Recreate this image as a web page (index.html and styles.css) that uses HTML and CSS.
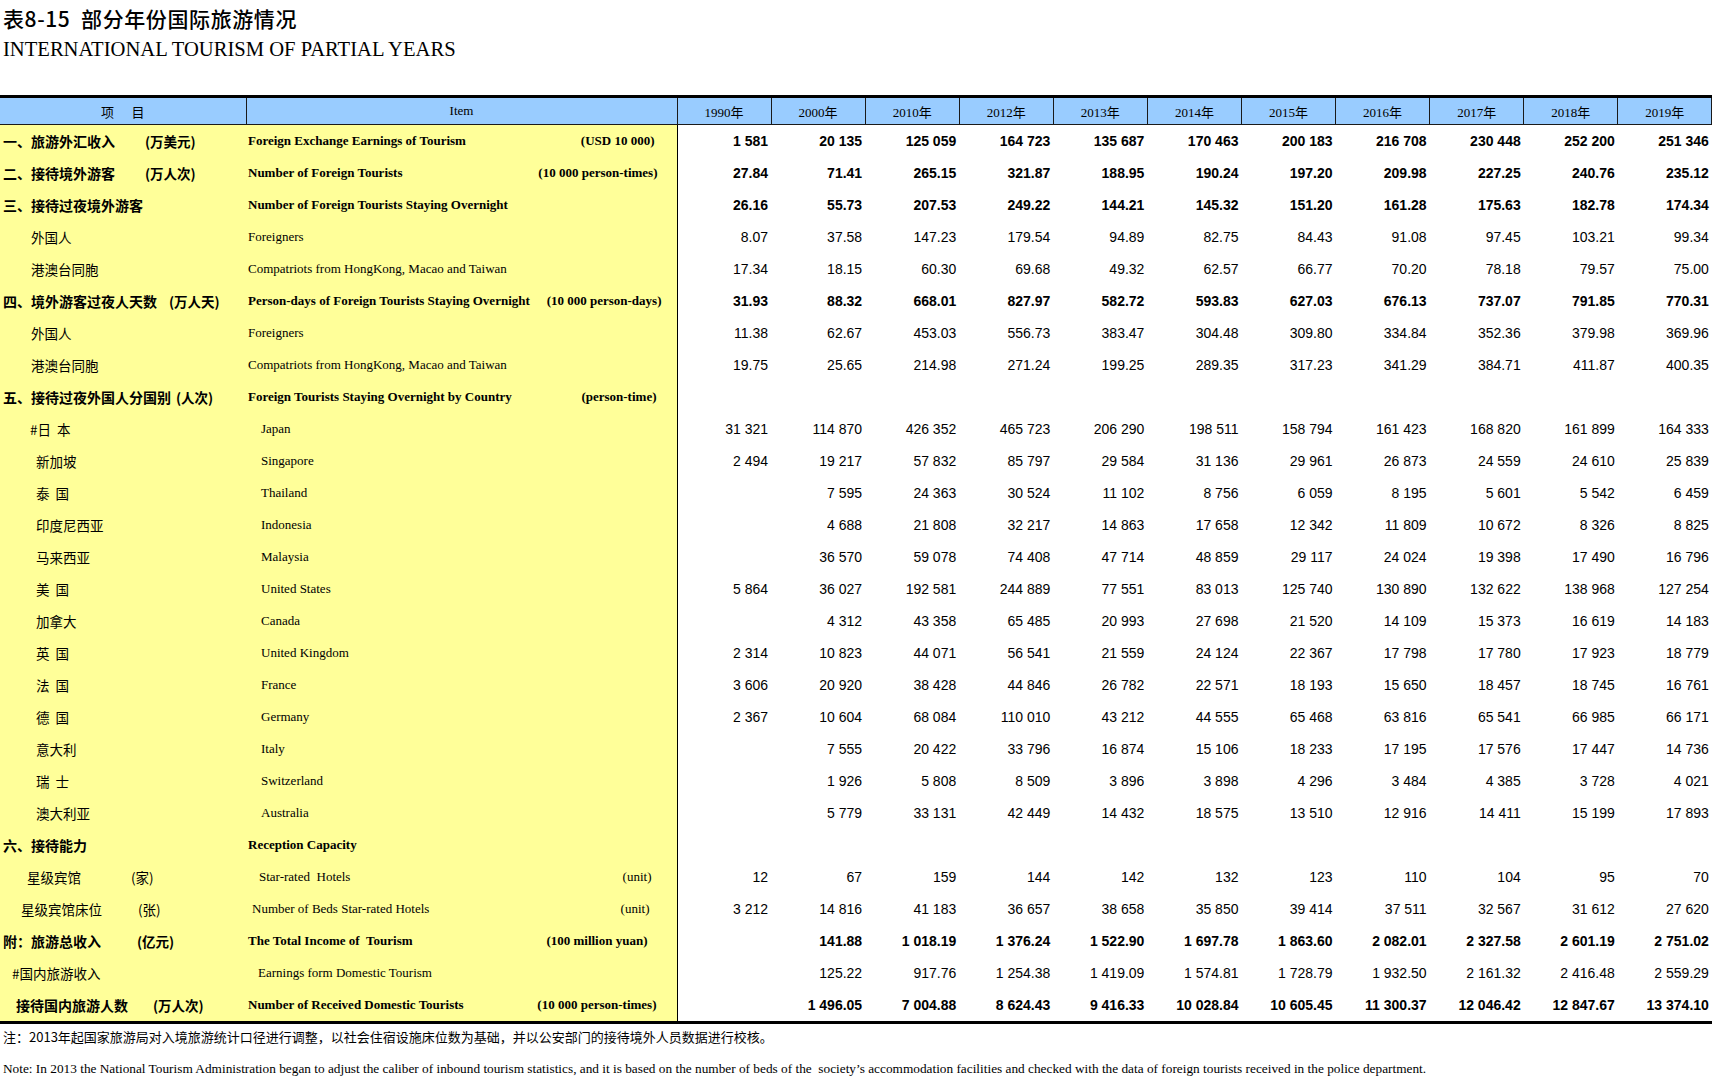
FILE: index.html
```html
<!DOCTYPE html>
<html lang="zh-CN">
<head>
<meta charset="utf-8">
<title>表8-15 部分年份国际旅游情况</title>
<link rel="stylesheet" href="styles.css">
</head>
<body>
<div class="page">
  <h1 class="title-cn">表8-15&nbsp;&nbsp;部分年份国际旅游情况</h1>
  <h2 class="title-en">INTERNATIONAL TOURISM OF PARTIAL YEARS</h2>

  <table class="data">
    <colgroup>
      <col class="c-cn"><col class="c-en">
      <col class="c-y"><col class="c-y"><col class="c-y"><col class="c-y"><col class="c-y"><col class="c-y"><col class="c-y"><col class="c-y"><col class="c-y"><col class="c-y"><col class="c-y">
    </colgroup>
    <thead>
      <tr>
        <th class="h-cn">项&nbsp;&nbsp;&nbsp;&nbsp;&nbsp;&nbsp;目</th>
        <th class="h-en">Item</th>
        <th>1990年</th><th>2000年</th><th>2010年</th><th>2012年</th><th>2013年</th><th>2014年</th><th>2015年</th><th>2016年</th><th>2017年</th><th>2018年</th><th>2019年</th>
      </tr>
    </thead>
    <tbody>
      <tr class="b">
        <td class="cn"><div class="cell"><span class="lab w142">一、旅游外汇收入</span><span>(万美元)</span></div></td>
        <td class="en"><div class="cell"><span>Foreign Exchange Earnings of Tourism</span><span class="unit u22">(USD 10 000)</span></div></td>
        <td>1 581</td><td>20 135</td><td>125 059</td><td>164 723</td><td>135 687</td><td>170 463</td><td>200 183</td><td>216 708</td><td>230 448</td><td>252 200</td><td>251 346</td>
      </tr>
      <tr class="b">
        <td class="cn"><div class="cell"><span class="lab w142">二、接待境外游客</span><span>(万人次)</span></div></td>
        <td class="en"><div class="cell"><span>Number of Foreign Tourists</span><span class="unit u19">(10 000 person-times)</span></div></td>
        <td>27.84</td><td>71.41</td><td>265.15</td><td>321.87</td><td>188.95</td><td>190.24</td><td>197.20</td><td>209.98</td><td>227.25</td><td>240.76</td><td>235.12</td>
      </tr>
      <tr class="b">
        <td class="cn"><div class="cell"><span class="lab">三、接待过夜境外游客</span></div></td>
        <td class="en"><div class="cell"><span>Number of Foreign Tourists Staying Overnight</span></div></td>
        <td>26.16</td><td>55.73</td><td>207.53</td><td>249.22</td><td>144.21</td><td>145.32</td><td>151.20</td><td>161.28</td><td>175.63</td><td>182.78</td><td>174.34</td>
      </tr>
      <tr>
        <td class="cn"><div class="cell i31"><span class="lab">外国人</span></div></td>
        <td class="en"><div class="cell"><span>Foreigners</span></div></td>
        <td>8.07</td><td>37.58</td><td>147.23</td><td>179.54</td><td>94.89</td><td>82.75</td><td>84.43</td><td>91.08</td><td>97.45</td><td>103.21</td><td>99.34</td>
      </tr>
      <tr>
        <td class="cn"><div class="cell i31"><span class="lab">港澳台同胞</span></div></td>
        <td class="en"><div class="cell"><span>Compatriots from HongKong, Macao and Taiwan</span></div></td>
        <td>17.34</td><td>18.15</td><td>60.30</td><td>69.68</td><td>49.32</td><td>62.57</td><td>66.77</td><td>70.20</td><td>78.18</td><td>79.57</td><td>75.00</td>
      </tr>
      <tr class="b">
        <td class="cn"><div class="cell"><span class="lab w166">四、境外游客过夜人天数</span><span>(万人天)</span></div></td>
        <td class="en"><div class="cell"><span>Person-days of Foreign Tourists Staying Overnight</span><span class="unit u15">(10 000 person-days)</span></div></td>
        <td>31.93</td><td>88.32</td><td>668.01</td><td>827.97</td><td>582.72</td><td>593.83</td><td>627.03</td><td>676.13</td><td>737.07</td><td>791.85</td><td>770.31</td>
      </tr>
      <tr>
        <td class="cn"><div class="cell i31"><span class="lab">外国人</span></div></td>
        <td class="en"><div class="cell"><span>Foreigners</span></div></td>
        <td>11.38</td><td>62.67</td><td>453.03</td><td>556.73</td><td>383.47</td><td>304.48</td><td>309.80</td><td>334.84</td><td>352.36</td><td>379.98</td><td>369.96</td>
      </tr>
      <tr>
        <td class="cn"><div class="cell i31"><span class="lab">港澳台同胞</span></div></td>
        <td class="en"><div class="cell"><span>Compatriots from HongKong, Macao and Taiwan</span></div></td>
        <td>19.75</td><td>25.65</td><td>214.98</td><td>271.24</td><td>199.25</td><td>289.35</td><td>317.23</td><td>341.29</td><td>384.71</td><td>411.87</td><td>400.35</td>
      </tr>
      <tr class="b">
        <td class="cn"><div class="cell"><span class="lab w173">五、接待过夜外国人分国别</span><span>(人次)</span></div></td>
        <td class="en"><div class="cell"><span>Foreign Tourists Staying Overnight by Country</span><span class="unit u20">(person-time)</span></div></td>
        <td></td><td></td><td></td><td></td><td></td><td></td><td></td><td></td><td></td><td></td><td></td>
      </tr>
      <tr>
        <td class="cn"><div class="cell i30"><span class="lab">#日&nbsp;&nbsp;本</span></div></td>
        <td class="en"><div class="cell e15"><span>Japan</span></div></td>
        <td>31 321</td><td>114 870</td><td>426 352</td><td>465 723</td><td>206 290</td><td>198 511</td><td>158 794</td><td>161 423</td><td>168 820</td><td>161 899</td><td>164 333</td>
      </tr>
      <tr>
        <td class="cn"><div class="cell i36"><span class="lab">新加坡</span></div></td>
        <td class="en"><div class="cell e15"><span>Singapore</span></div></td>
        <td>2 494</td><td>19 217</td><td>57 832</td><td>85 797</td><td>29 584</td><td>31 136</td><td>29 961</td><td>26 873</td><td>24 559</td><td>24 610</td><td>25 839</td>
      </tr>
      <tr>
        <td class="cn"><div class="cell i36"><span class="lab">泰&nbsp;&nbsp;国</span></div></td>
        <td class="en"><div class="cell e15"><span>Thailand</span></div></td>
        <td></td><td>7 595</td><td>24 363</td><td>30 524</td><td>11 102</td><td>8 756</td><td>6 059</td><td>8 195</td><td>5 601</td><td>5 542</td><td>6 459</td>
      </tr>
      <tr>
        <td class="cn"><div class="cell i36"><span class="lab">印度尼西亚</span></div></td>
        <td class="en"><div class="cell e15"><span>Indonesia</span></div></td>
        <td></td><td>4 688</td><td>21 808</td><td>32 217</td><td>14 863</td><td>17 658</td><td>12 342</td><td>11 809</td><td>10 672</td><td>8 326</td><td>8 825</td>
      </tr>
      <tr>
        <td class="cn"><div class="cell i36"><span class="lab">马来西亚</span></div></td>
        <td class="en"><div class="cell e15"><span>Malaysia</span></div></td>
        <td></td><td>36 570</td><td>59 078</td><td>74 408</td><td>47 714</td><td>48 859</td><td>29 117</td><td>24 024</td><td>19 398</td><td>17 490</td><td>16 796</td>
      </tr>
      <tr>
        <td class="cn"><div class="cell i36"><span class="lab">美&nbsp;&nbsp;国</span></div></td>
        <td class="en"><div class="cell e15"><span>United States</span></div></td>
        <td>5 864</td><td>36 027</td><td>192 581</td><td>244 889</td><td>77 551</td><td>83 013</td><td>125 740</td><td>130 890</td><td>132 622</td><td>138 968</td><td>127 254</td>
      </tr>
      <tr>
        <td class="cn"><div class="cell i36"><span class="lab">加拿大</span></div></td>
        <td class="en"><div class="cell e15"><span>Canada</span></div></td>
        <td></td><td>4 312</td><td>43 358</td><td>65 485</td><td>20 993</td><td>27 698</td><td>21 520</td><td>14 109</td><td>15 373</td><td>16 619</td><td>14 183</td>
      </tr>
      <tr>
        <td class="cn"><div class="cell i36"><span class="lab">英&nbsp;&nbsp;国</span></div></td>
        <td class="en"><div class="cell e15"><span>United Kingdom</span></div></td>
        <td>2 314</td><td>10 823</td><td>44 071</td><td>56 541</td><td>21 559</td><td>24 124</td><td>22 367</td><td>17 798</td><td>17 780</td><td>17 923</td><td>18 779</td>
      </tr>
      <tr>
        <td class="cn"><div class="cell i36"><span class="lab">法&nbsp;&nbsp;国</span></div></td>
        <td class="en"><div class="cell e15"><span>France</span></div></td>
        <td>3 606</td><td>20 920</td><td>38 428</td><td>44 846</td><td>26 782</td><td>22 571</td><td>18 193</td><td>15 650</td><td>18 457</td><td>18 745</td><td>16 761</td>
      </tr>
      <tr>
        <td class="cn"><div class="cell i36"><span class="lab">德&nbsp;&nbsp;国</span></div></td>
        <td class="en"><div class="cell e15"><span>Germany</span></div></td>
        <td>2 367</td><td>10 604</td><td>68 084</td><td>110 010</td><td>43 212</td><td>44 555</td><td>65 468</td><td>63 816</td><td>65 541</td><td>66 985</td><td>66 171</td>
      </tr>
      <tr>
        <td class="cn"><div class="cell i36"><span class="lab">意大利</span></div></td>
        <td class="en"><div class="cell e15"><span>Italy</span></div></td>
        <td></td><td>7 555</td><td>20 422</td><td>33 796</td><td>16 874</td><td>15 106</td><td>18 233</td><td>17 195</td><td>17 576</td><td>17 447</td><td>14 736</td>
      </tr>
      <tr>
        <td class="cn"><div class="cell i36"><span class="lab">瑞&nbsp;&nbsp;士</span></div></td>
        <td class="en"><div class="cell e15"><span>Switzerland</span></div></td>
        <td></td><td>1 926</td><td>5 808</td><td>8 509</td><td>3 896</td><td>3 898</td><td>4 296</td><td>3 484</td><td>4 385</td><td>3 728</td><td>4 021</td>
      </tr>
      <tr>
        <td class="cn"><div class="cell i36"><span class="lab">澳大利亚</span></div></td>
        <td class="en"><div class="cell e15"><span>Australia</span></div></td>
        <td></td><td>5 779</td><td>33 131</td><td>42 449</td><td>14 432</td><td>18 575</td><td>13 510</td><td>12 916</td><td>14 411</td><td>15 199</td><td>17 893</td>
      </tr>
      <tr class="b">
        <td class="cn"><div class="cell"><span class="lab">六、接待能力</span></div></td>
        <td class="en"><div class="cell"><span>Reception Capacity</span></div></td>
        <td></td><td></td><td></td><td></td><td></td><td></td><td></td><td></td><td></td><td></td><td></td>
      </tr>
      <tr>
        <td class="cn"><div class="cell i27"><span class="lab w104">星级宾馆</span><span>(家)</span></div></td>
        <td class="en"><div class="cell e13"><span>Star-rated&nbsp;&nbsp;Hotels</span><span class="unit u25">(unit)</span></div></td>
        <td>12</td><td>67</td><td>159</td><td>144</td><td>142</td><td>132</td><td>123</td><td>110</td><td>104</td><td>95</td><td>70</td>
      </tr>
      <tr>
        <td class="cn"><div class="cell i21"><span class="lab w117">星级宾馆床位</span><span>(张)</span></div></td>
        <td class="en"><div class="cell e6"><span>Number of Beds Star-rated Hotels</span><span class="unit u27">(unit)</span></div></td>
        <td>3 212</td><td>14 816</td><td>41 183</td><td>36 657</td><td>38 658</td><td>35 850</td><td>39 414</td><td>37 511</td><td>32 567</td><td>31 612</td><td>27 620</td>
      </tr>
      <tr class="b">
        <td class="cn"><div class="cell"><span class="lab w134">附：旅游总收入</span><span>(亿元)</span></div></td>
        <td class="en"><div class="cell"><span>The Total Income of&nbsp;&nbsp;Tourism</span><span class="unit u29">(100 million yuan)</span></div></td>
        <td></td><td>141.88</td><td>1 018.19</td><td>1 376.24</td><td>1 522.90</td><td>1 697.78</td><td>1 863.60</td><td>2 082.01</td><td>2 327.58</td><td>2 601.19</td><td>2 751.02</td>
      </tr>
      <tr>
        <td class="cn"><div class="cell i12"><span class="lab">#国内旅游收入</span></div></td>
        <td class="en"><div class="cell e12"><span>Earnings form Domestic Tourism</span></div></td>
        <td></td><td>125.22</td><td>917.76</td><td>1 254.38</td><td>1 419.09</td><td>1 574.81</td><td>1 728.79</td><td>1 932.50</td><td>2 161.32</td><td>2 416.48</td><td>2 559.29</td>
      </tr>
      <tr class="b last">
        <td class="cn"><div class="cell i16"><span class="lab w137">接待国内旅游人数</span><span>(万人次)</span></div></td>
        <td class="en"><div class="cell"><span>Number of Received Domestic Tourists</span><span class="unit u20">(10 000 person-times)</span></div></td>
        <td></td><td>1 496.05</td><td>7 004.88</td><td>8 624.43</td><td>9 416.33</td><td>10 028.84</td><td>10 605.45</td><td>11 300.37</td><td>12 046.42</td><td>12 847.67</td><td>13 374.10</td>
      </tr>
    </tbody>
  </table>

  <p class="note-cn">注：2013年起国家旅游局对入境旅游统计口径进行调整，以社会住宿设施床位数为基础，并以公安部门的接待境外人员数据进行校核。</p>
  <p class="note-en">Note: In 2013 the National Tourism Administration began to adjust the caliber of inbound tourism statistics, and it is based on the number of beds of the&nbsp;&nbsp;society’s accommodation facilities and checked with the data of foreign tourists received in the police department.</p>
</div>
</body>
</html>
```

FILE: styles.css
```css
html, body {
  margin: 0;
  padding: 0;
  background: #ffffff;
  color: #000000;
}

.page {
  width: 1712px;
  height: 1086px;
  overflow: hidden;
}

.title-cn {
  margin: 0;
  padding: 4px 0 0 3px;
  height: 28px;
  font-family: "Noto Sans CJK SC", sans-serif;
  font-size: 21px;
  font-weight: 500;
  line-height: 28px;
  letter-spacing: 0.6px;
}

.title-en {
  margin: 0;
  padding: 2px 0 0 3px;
  height: 30px;
  font-family: "Liberation Serif", "Times New Roman", serif;
  font-size: 20.6px;
  font-weight: normal;
  line-height: 30px;
}

.data {
  margin-top: 31px;
  width: 1712px;
  table-layout: fixed;
  border-collapse: collapse;
  border-top: 3px solid #000;
  border-bottom: 3px solid #000;
}

.c-cn { width: 246px; }
.c-en { width: 431px; }
.c-y { width: 94.09px; }

.data th {
  height: 26px;
  padding: 0;
  background: #99ccff;
  border: 1px solid #1a1a1a;
  border-top: none;
  font-family: "Liberation Serif", "Noto Sans CJK SC", serif;
  font-size: 13px;
  font-weight: normal;
  text-align: center;
  vertical-align: middle;
}

.data th.h-cn {
  border-left: none;
  font-family: "Noto Sans CJK SC", sans-serif;
  font-size: 13px;
}

.data td {
  height: 32px;
  padding: 0 3px 0 0;
  font-family: "Liberation Sans", Arial, sans-serif;
  font-size: 14px;
  text-align: right;
  vertical-align: middle;
  white-space: nowrap;
}

.data td.cn,
.data td.en {
  background: #ffff99;
  padding: 0;
  text-align: left;
}

.data td.en {
  border-right: 1px solid #000;
}

.data td.cn {
  font-family: "Noto Sans CJK SC", sans-serif;
  font-size: 13.5px;
}

.data td.en {
  font-family: "Liberation Serif", "Times New Roman", serif;
  font-size: 13px;
}

.cell {
  display: flex;
  align-items: center;
  padding-left: 3px;
}

.data td.en .cell {
  padding-left: 2px;
}

.data td.en .cell .unit {
  margin-left: auto;
}

.data tr.b td {
  font-weight: bold;
}

.data tr.b td.cn .lab {
  font-size: 14px;
}

.lab { flex: none; }

.w142 { width: 142px; }
.w166 { width: 166px; }
.w173 { width: 173px; }
.w104 { width: 104px; }
.w117 { width: 117px; }
.w134 { width: 134px; }
.w137 { width: 137px; }

.cell.i12 { padding-left: 12px; }
.cell.i16 { padding-left: 16px; }
.cell.i21 { padding-left: 21px; }
.cell.i27 { padding-left: 27px; }
.cell.i30 { padding-left: 30px; }
.cell.i31 { padding-left: 31px; }
.cell.i36 { padding-left: 36px; }

.data td.en .cell.e6 { padding-left: 6px; }
.data td.en .cell.e12 { padding-left: 12px; }
.data td.en .cell.e13 { padding-left: 13px; }
.data td.en .cell.e15 { padding-left: 15px; }

.unit.u15 { margin-right: 15px; }
.unit.u19 { margin-right: 19px; }
.unit.u20 { margin-right: 20px; }
.unit.u22 { margin-right: 22px; }
.unit.u25 { margin-right: 25px; }
.unit.u27 { margin-right: 27px; }
.unit.u29 { margin-right: 29px; }

.note-cn {
  margin: 0;
  padding: 1px 0 0 3px;
  height: 24px;
  font-family: "Noto Sans CJK SC", sans-serif;
  font-size: 13px;
  line-height: 24px;
}

.note-en {
  margin: 0;
  padding: 10px 0 0 3px;
  font-family: "Liberation Serif", "Times New Roman", serif;
  font-size: 13.3px;
  line-height: 20px;
  white-space: nowrap;
}
```
